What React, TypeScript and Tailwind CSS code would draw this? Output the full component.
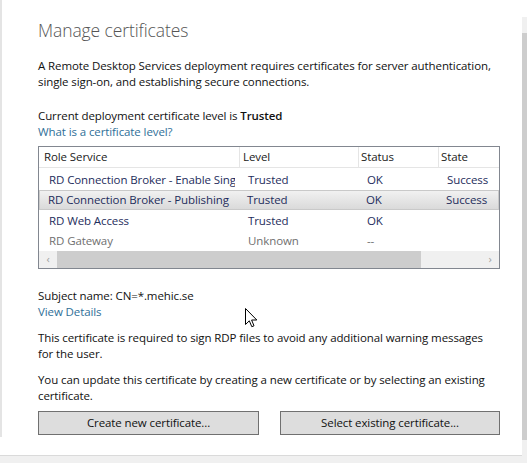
import React from "react";

const font = { fontFamily: '"Open Sans", "Noto Sans", sans-serif' };

type Row = { role: string; level: string; status: string; state: string; dim?: boolean; selected?: boolean };

const rows: Row[] = [
  { role: "RD Connection Broker - Enable Single Sign On", level: "Trusted", status: "OK", state: "Success" },
  { role: "RD Connection Broker - Publishing", level: "Trusted", status: "OK", state: "Success", selected: true },
  { role: "RD Web Access", level: "Trusted", status: "OK", state: "" },
  { role: "RD Gateway", level: "Unknown", status: "--", state: "", dim: true },
];

function Cursor() {
  return (
    <svg className="absolute left-[245px] top-[308px]" width="13" height="20" viewBox="0 0 13 20">
      <path
        d="M0.5 0.5 L0.5 16.5 L4.3 12.8 L6.8 18.7 L9 17.8 L6.6 12 L11.8 12 Z"
        fill="#fff"
        stroke="#000"
        strokeWidth="1"
        strokeLinejoin="round"
      />
    </svg>
  );
}

export default function App() {
  return (
    <div
      className="relative w-[527px] h-[463px] bg-white overflow-hidden text-[11.5px] tracking-[-0.1px] text-[#111]"
      style={font}
    >
      <div className="flex h-[455px]">
        {/* left edge */}
        <div className="w-[2px] h-[437px] bg-[#e4e4e4]" />

        {/* content */}
        <div className="flex-1 pl-[36px] pr-[22px]">
          <h1 className="mt-[16px] text-[17.5px] leading-[28px] font-light text-[#555] tracking-[-0.1px]">
            Manage certificates
          </h1>

          <p className="mt-[14px] leading-[16px] pr-[6px]">
            A Remote Desktop Services deployment requires certificates for server authentication, single sign-on, and
            establishing secure connections.
          </p>

          <p className="mt-[18px] leading-[16px]">
            Current deployment certificate level is <span className="font-semibold">Trusted</span>
          </p>
          <p className="leading-[16px] text-[#2f6f98]">What is a certificate level?</p>

          {/* table */}
          <div className="mt-[6px] border border-[#828790] h-[123px] flex flex-col">
            <div className="flex h-[21px] items-center border-b border-[#e5e5e5] text-[#1a1a1a]">
              <div className="w-[201px] pl-[5px] border-r border-[#e5e5e5] h-full flex items-center">Role Service</div>
              <div className="w-[119px] pl-[3px] border-r border-[#e5e5e5] h-full flex items-center">Level</div>
              <div className="w-[80px] pl-[2px] border-r border-[#e5e5e5] h-full flex items-center">Status</div>
              <div className="flex-1 pl-[2px] h-full flex items-center">State</div>
            </div>
            <div className="flex-1 pt-px px-px">
              {rows.map((r) => (
                <div
                  key={r.role}
                  className={
                    "flex h-[20.5px] items-center " +
                    (r.dim ? "text-[#707070] " : "text-[#1e2d5c] ") +
                    (r.selected
                      ? "bg-gradient-to-b from-[#f1f1f1] to-[#dadada] border border-[#c9c9c9] -mx-px"
                      : "border border-transparent")
                  }
                >
                  <div className="w-[194px] pl-[8px] whitespace-nowrap overflow-hidden">{r.role}</div>
                  <div className="w-[118px] pl-[13px]">{r.level}</div>
                  <div className="w-[80px] pl-[14px]">{r.status}</div>
                  <div className="flex-1 pl-[14px]">{r.state}</div>
                </div>
              ))}
            </div>
            {/* horizontal scrollbar */}
            <div className="flex h-[17px] bg-[#f0f0f0] items-center text-[#a0a0a0] text-[11px]">
              <div className="w-[18px] text-center">‹</div>
              <div className="w-[364px] h-full bg-[#cdcdcd]" />
              <div className="flex-1" />
              <div className="w-[18px] text-center">›</div>
            </div>
          </div>

          <p className="mt-[19px] leading-[16px]">Subject name: CN=*.mehic.se</p>
          <p className="leading-[16px] text-[#2f6f98]">View Details</p>

          <p className="mt-[10px] leading-[16px] pr-[12px]">
            This certificate is required to sign RDP files to avoid any additional warning messages for the user.
          </p>

          <p className="mt-[10px] leading-[16px] pr-[6px]">
            You can update this certificate by creating a new certificate or by selecting an existing certificate.
          </p>

          <div className="mt-[7px] flex justify-between">
            <button
              type="button"
              className="w-[221px] h-[24px] bg-[#dddddd] border border-[#707070] text-[#111] text-[11.5px]"
            >
              Create new certificate...
            </button>
            <button
              type="button"
              className="w-[220px] h-[24px] bg-[#dddddd] border border-[#707070] text-[#111] text-[11.5px]"
            >
              Select existing certificate...
            </button>
          </div>
        </div>

        {/* right vertical scrollbar */}
        <div className="w-[5px] mt-[17px] h-[441px] bg-[#f0f0f0] flex flex-col">
          <div className="h-[16px]" />
          <div className="h-[407px] bg-[#cdcdcd]" />
        </div>
      </div>

      {/* bottom edge */}
      <div className="h-[8px] border-t border-[#dadada] bg-[#f0f0f0]" />

      <Cursor />
    </div>
  );
}
